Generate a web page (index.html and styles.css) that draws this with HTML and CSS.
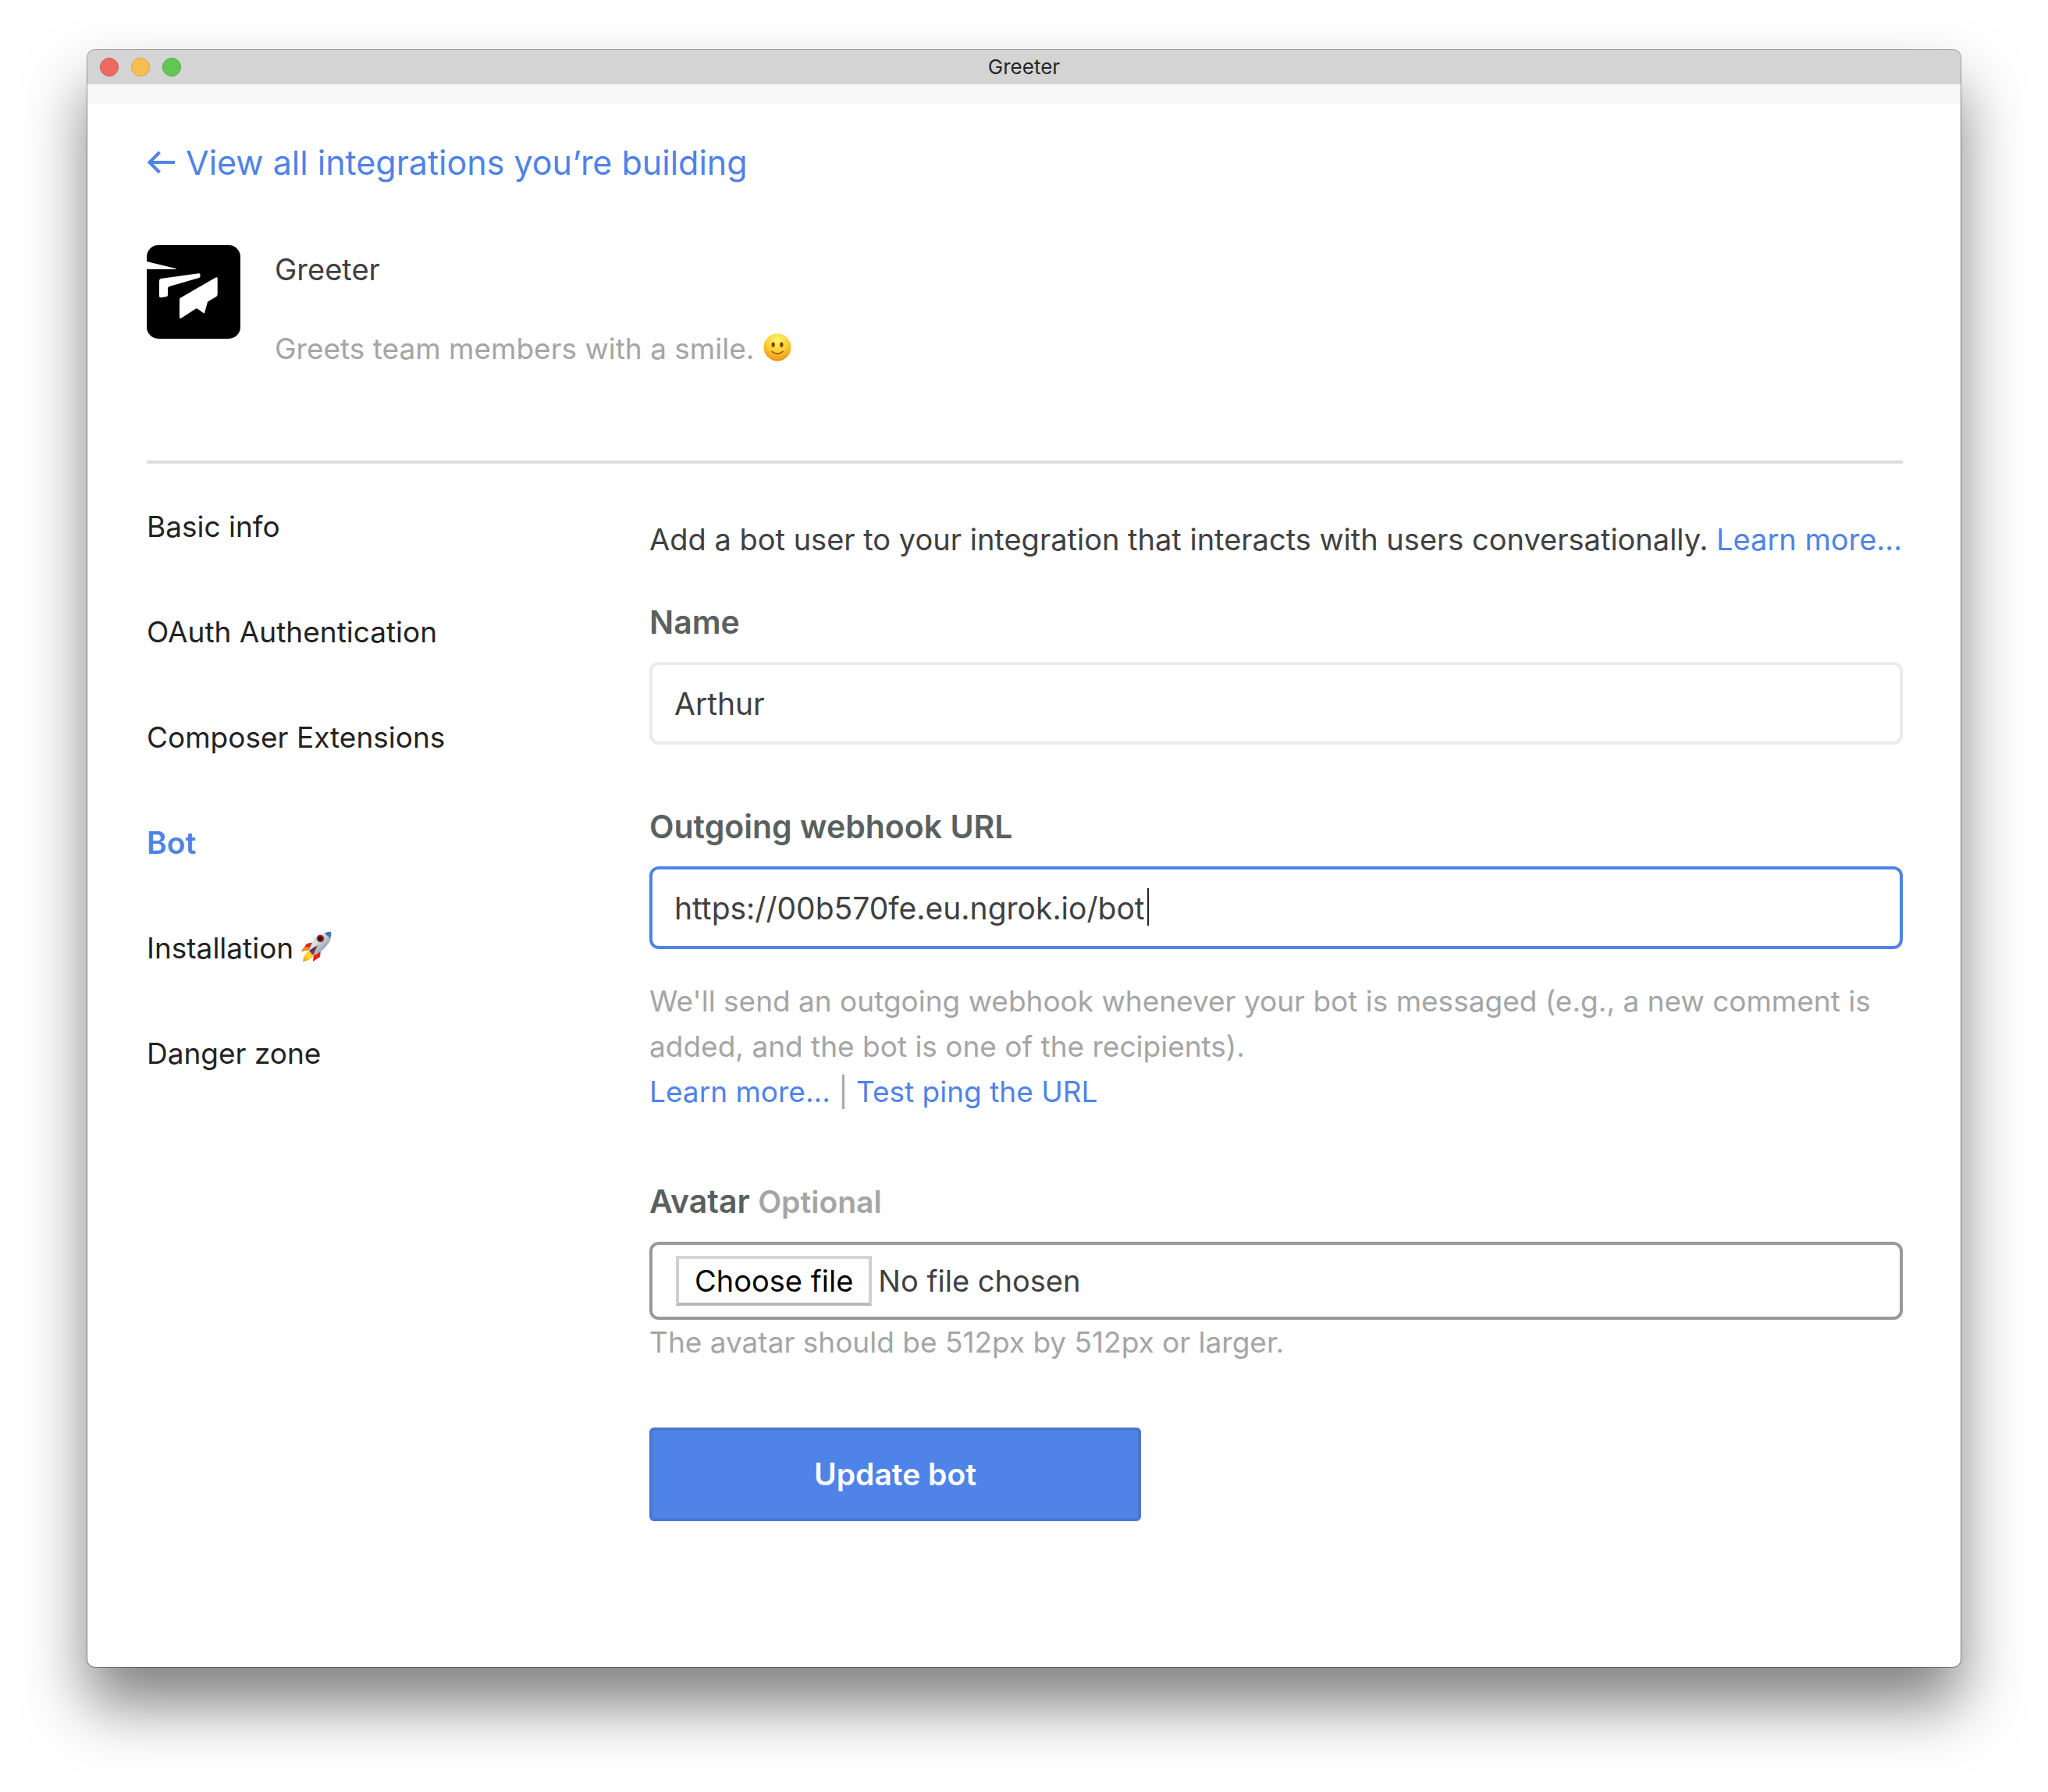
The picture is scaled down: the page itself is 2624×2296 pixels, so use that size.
FILE: index.html
```html
<!DOCTYPE html>
<html lang="en">
<head>
<meta charset="utf-8">
<meta name="viewport" content="width=device-width, initial-scale=1">
<title>Greeter</title>
<link rel="stylesheet" href="styles.css">
</head>
<body>
<div class="window">
  <header class="titlebar">
    <div class="lights">
      <span class="light light-close"></span>
      <span class="light light-minimise"></span>
      <span class="light light-zoom"></span>
    </div>
    <div class="window-title">Greeter</div>
  </header>
  <div class="strip"></div>
  <div class="page">
    <a class="back" href="#">
      <svg class="back-arrow" width="36" height="32" viewBox="0 0 36 32" fill="none" stroke="currentColor" stroke-width="4" aria-hidden="true"><path d="M3 16H36M16.500 3L3.500 16l13 13"/></svg>
      <span>View all integrations you’re building</span>
    </a>
    <section class="profile">
      <svg class="logo" width="120" height="120" viewBox="0 0 120 120" aria-hidden="true">
        <rect width="120" height="120" rx="15"/>
        <g fill="#fff">
          <path d="M0 21l37 9q2 1 0 1H0z"/>
          <path d="M18 43l48.500-6.700q2-.3 2 1.700v2q0 1.600-1.500 2L29 53q-2 .6-2 2.500V64q0 1.700-1.500 1.900l-7 1.300q-2.500.4-2.500-1.600V46q0-2.600 2-3z"/>
          <path d="M43.500 67.500L88 41.800q2.700-1.500 2.700 1V63q0 2-1.500 3L79 72q-1 .7-1.300 2l-3.500 12.500q-.5 1.500-1.700.6L65.500 82q-1.500-1.200-3-.2L44.500 93.600q-2.500 1.300-2.500-1.300V70q0-1.700 1.500-2.500z"/>
        </g>
      </svg>
      <div class="profile-text">
        <h1 class="profile-name">Greeter</h1>
        <p class="profile-about"><span>Greets team members with a smile.</span>
          <svg class="emoji" width="36" height="36" viewBox="0 0 36 36" role="img" aria-label="smiling face">
            <defs><radialGradient id="face" cx=".5" cy=".25" r=".78"><stop offset="0" stop-color="#fff36e"/><stop offset=".5" stop-color="#fdd033"/><stop offset=".85" stop-color="#f6a21c"/><stop offset="1" stop-color="#dd7a14"/></radialGradient></defs>
            <circle cx="18" cy="18" r="17.500" fill="url(#face)"/>
            <ellipse cx="12.700" cy="14.700" rx="2.200" ry="3.100" fill="#7a4509"/>
            <ellipse cx="23.300" cy="14.700" rx="2.200" ry="3.100" fill="#7a4509"/>
            <path d="M11 23.500q7 5.500 14 0" fill="none" stroke="#7a4509" stroke-width="1.500" stroke-linecap="round"/>
          </svg>
        </p>
      </div>
    </section>
    <div class="columns">
      <nav class="side">
        <a href="#">Basic info</a>
        <a href="#">OAuth Authentication</a>
        <a href="#">Composer Extensions</a>
        <a class="current" href="#" aria-current="page">Bot</a>
        <a href="#">Installation
          <svg class="emoji" width="40" height="40" viewBox="0 0 40 40" role="img" aria-label="rocket">
            <defs><linearGradient id="hull" x1="0" y1="0" x2="1" y2="1"><stop offset="0" stop-color="#4b82b4"/><stop offset=".35" stop-color="#dfe6ea"/><stop offset=".6" stop-color="#aab9c4"/><stop offset="1" stop-color="#2c5f98"/></linearGradient>
            <linearGradient id="flame" x1="1" y1="0" x2="0" y2="1"><stop offset="0" stop-color="#f6a01c"/><stop offset=".5" stop-color="#ffdf3a"/><stop offset="1" stop-color="#f08a1d"/></linearGradient></defs>
            <path d="M17 14L7 16 0 26l10-2z" fill="#e0261b"/><path d="M0 26l4-6 8 1-2 3z" fill="#f48b2a"/>
            <path d="M25 24l-1 9-9 6 1-10z" fill="#e0261b"/>
            <path d="M10 25l6 5q-3 8-14 9 1-10 8-14z" fill="url(#flame)"/>
            <path d="M38 1q2 9-5 17-6 8-16 13l-7-6Q13 13 21 6q8-6 17-5z" fill="url(#hull)"/>
            <path d="M30 3q5-3 8-2 1 4-1 8z" fill="#3d77ae"/>
            <path d="M10 25l9-6-3 11z" fill="#21456f"/><path d="M22 17l-10 11 3 2z" fill="#b81c18"/>
            <circle cx="24.500" cy="9.500" r="4.800" fill="#c5231d"/><circle cx="24.500" cy="9.500" r="3" fill="#221a22"/>
          </svg>
        </a>
        <a href="#">Danger zone</a>
      </nav>
      <form class="bot-form">
        <p class="intro">Add a bot user to your integration that interacts with users conversationally. <a href="#">Learn more…</a></p>
        <div class="field field-name">
          <label class="field-label" for="name">Name</label>
          <input class="text-box" id="name" type="text" value="Arthur">
        </div>
        <div class="field field-url">
          <label class="field-label" for="url">Outgoing webhook URL</label>
          <div class="caret-box">
            <input class="text-box text-box-active" id="url" type="text" value="https://00b570fe.eu.ngrok.io/bot">
            <span class="caret"></span>
          </div>
          <div class="help help-url">
            <p>We'll send an outgoing webhook whenever your bot is messaged (e.g., a new comment is added, and the bot is one of the recipients).</p>
            <p><a href="#">Learn more...</a> | <a href="#">Test ping the URL</a></p>
          </div>
        </div>
        <div class="field field-avatar">
          <label class="field-label" for="avatar">Avatar <span class="optional">Optional</span></label>
          <div class="file-box">
            <span class="file-button">Choose file</span>
            <span class="file-state">No file chosen</span>
            <input class="file-input" id="avatar" type="file">
          </div>
          <p class="help">The avatar should be 512px by 512px or larger.</p>
        </div>
        <button class="submit" type="button">Update bot</button>
      </form>
    </div>
  </div>
</div>
</body>
</html>
```
FILE: styles.css
```css
* {
  box-sizing: border-box;
}

body {
  margin: 0;
  min-height: 100vh;
  padding: 64px 112px 160px;
  display: flex;
  flex-direction: column;
  background: #fff;
  color: #404040;
  font-family: Inter, "Liberation Sans", sans-serif;
  font-size: 38px;
  line-height: 58px;
}

h1,
p {
  margin: 0;
  font-size: inherit;
  font-weight: 400;
}

a {
  color: #4f83e8;
  text-decoration: none;
}

.window {
  flex: 1;
  border-radius: 10px;
  background: #fff;
  overflow: hidden;
  box-shadow: 0 0 0 1px rgba(0, 0, 0, 0.35), 0 48px 80px rgba(0, 0, 0, 0.5);
}

.titlebar {
  display: grid;
  grid-template-columns: 1fr auto 1fr;
  align-items: center;
  height: 44px;
  padding: 0 16px;
  background: #d4d4d4;
  color: #262626;
  font-size: 26px;
  line-height: 32px;
}

.lights {
  display: flex;
  gap: 16px;
}

.light {
  width: 24px;
  height: 24px;
  border: 1px solid;
  border-radius: 50%;
}

.light-close {
  background: #ed6b60;
  border-color: #d35449;
}

.light-minimise {
  background: #f5c04f;
  border-color: #d9a03d;
}

.light-zoom {
  background: #62c655;
  border-color: #50a73f;
}

.strip {
  height: 26px;
  background: #f8f8f8;
}

.page {
  padding: 44px 74px 120px 76px;
}

.back {
  display: flex;
  align-items: center;
  gap: 14px;
  font-size: 43px;
  line-height: 60px;
}

.profile {
  display: flex;
  gap: 44px;
  padding: 76px 0 114px;
  border-bottom: 4px solid #ddd;
}

.profile-text {
  display: flex;
  flex-direction: column;
  gap: 44px;
  padding-top: 2px;
}

.profile-about {
  display: flex;
  align-items: center;
  gap: 12px;
  color: #a5a5a5;
  font-size: 37px;
}

.emoji {
  margin-bottom: 4px;
}

.columns {
  display: grid;
  grid-template-columns: 644px minmax(0, 1fr);
}

.side {
  display: flex;
  flex-direction: column;
  gap: 77px;
  padding-top: 52px;
  font-size: 37px;
}

.side a {
  display: flex;
  align-items: center;
  gap: 10px;
  color: #222;
}

.side .current {
  color: #4f83e8;
  font-size: 39px;
  font-weight: 600;
}

.bot-form {
  padding-top: 68px;
}

.field {
  display: flex;
  flex-direction: column;
}

.field-label {
  margin-bottom: 22px;
  color: #5a605f;
  font-size: 41px;
  font-weight: 600;
}

.field-name {
  padding-top: 48px;
}

.field-url {
  padding-top: 76px;
}

.field-avatar {
  padding-top: 82px;
}

.optional {
  color: #a5a5a5;
  font-size: 39px;
}

.text-box {
  width: 100%;
  height: 106px;
  padding: 0 28px;
  border: 4px solid #ebebeb;
  border-radius: 12px;
  background: #fff;
  color: #404040;
  font: inherit;
  font-size: 39px;
  outline: 0;
}

.text-box-active {
  border-color: #4f83e8;
}

.caret-box {
  position: relative;
  display: flex;
}

.caret {
  position: absolute;
  top: 28px;
  left: 638px;
  width: 2px;
  height: 48px;
  background: #222;
}

.help {
  color: #a5a5a5;
  font-size: 37px;
}

.help-url {
  padding-top: 38px;
}

.file-box {
  position: relative;
  display: flex;
  align-items: center;
  gap: 8px;
  height: 100px;
  padding: 0 30px;
  border: 4px solid #999;
  border-radius: 12px;
}

.file-button {
  padding: 0 20px;
  border: 4px solid;
  border-color: #d6d6d6 #d0d0d0 #b8b8b8;
  color: #000;
  line-height: 56px;
}

.file-input {
  position: absolute;
  inset: 0;
  width: 100%;
  opacity: 0;
}

.submit {
  width: 630px;
  height: 120px;
  margin-top: 80px;
  border: 4px solid #4976d1;
  border-radius: 6px;
  background: #4f83e8;
  color: #fff;
  font: inherit;
  font-size: 39px;
  font-weight: 600;
}
```
